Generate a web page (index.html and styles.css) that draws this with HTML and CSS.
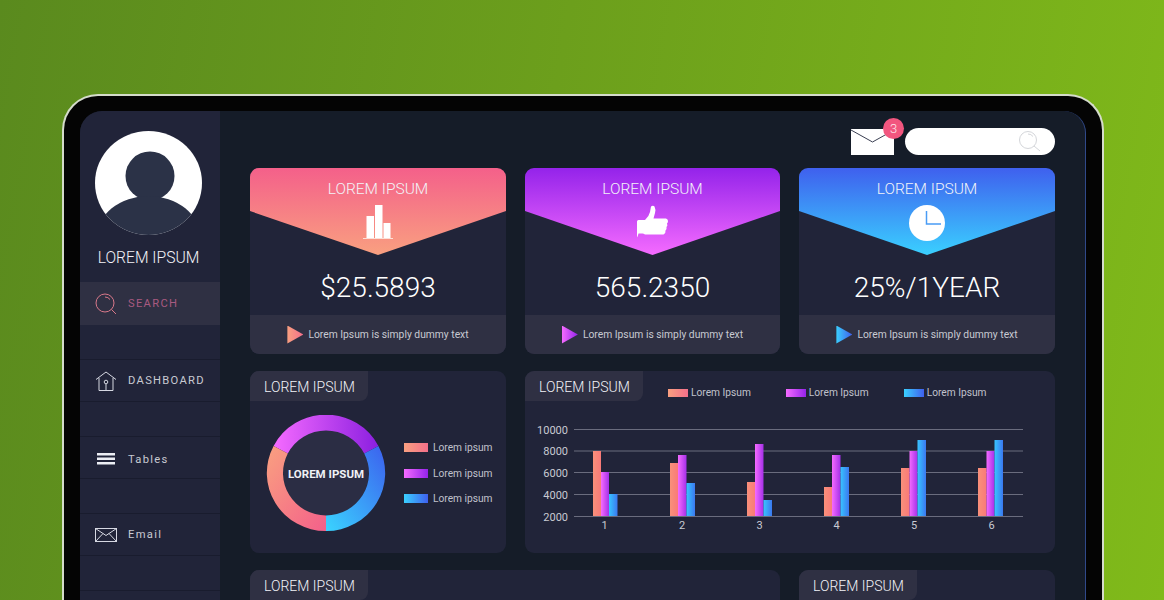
FILE: index.html
```html
<!DOCTYPE html>
<html>

<head>
    <meta charset="utf-8">
    <title>Dashboard</title>

    <link rel="stylesheet" href="styles.css">
</head>

<body>

    <div class="laptop">
        <div class="screen">

            <div class="sidebar">
                <svg class="avatar" width="107" height="104" viewBox="0 0 107 104">
                    <defs>
                        <clipPath id="avatarClip">
                            <ellipse cx="53.5" cy="52" rx="53.5" ry="52" />
                        </clipPath>
                    </defs>
                    <ellipse cx="53.5" cy="52" rx="53.5" ry="52" fill="#ffffff" />
                    <g clip-path="url(#avatarClip)" fill="#2b3247">
                        <circle cx="55" cy="45" r="24.5" />
                        <ellipse cx="53.5" cy="107" rx="52" ry="42" />
                    </g>
                </svg>
                <p class="user-name">LOREM IPSUM</p>

                <div class="nav">
                    <div class="nav-item active">
                        <svg width="24" height="24" viewBox="0 0 24 24" fill="none" stroke="#d9788a" stroke-width="1">
                            <circle cx="11" cy="11" r="9" />
                            <path d="M17.5 17.5l4.5 4.5M11 5a6 6 0 0 1 5 2.500" />
                        </svg>
                        <span>SEARCH</span>
                    </div>
                    <div class="nav-item">
                        <svg width="24" height="24" viewBox="0 0 24 24" fill="none" stroke="#d6d8e2" stroke-width="1">
                            <path d="M2 10.500L12 3l10 7.500M5 9v12.500h14V9" />
                            <circle cx="12" cy="13" r="1.800" />
                            <path d="M12 15v6.500" />
                        </svg>
                        <span>DASHBOARD</span>
                    </div>
                    <div class="nav-item low">
                        <svg width="24" height="24" viewBox="0 0 24 24" fill="#eceef4">
                            <rect x="3" y="6" width="18" height="2.500" />
                            <rect x="3" y="10.500" width="18" height="2.500" />
                            <rect x="3" y="15" width="18" height="2.500" />
                        </svg>
                        <span>Tables</span>
                    </div>
                    <div class="nav-item">
                        <svg width="24" height="24" viewBox="0 0 24 24" fill="none" stroke="#d6d8e2" stroke-width="1">
                            <rect x="1.500" y="5.500" width="21" height="13" />
                            <path d="M1.500 5.500L12 12.500l10.500-7M1.500 18.500l7.500-8M22.500 18.500l-7.500-8" />
                        </svg>
                        <span>Email</span>
                    </div>
                    <div class="nav-item"></div>
                </div>
            </div>

            <div class="main">
                <div class="topbar">
                    <div class="mail">
                        <svg width="43" height="26" viewBox="0 0 43 26">
                            <rect width="43" height="26" fill="#ffffff" />
                            <path d="M0 1l21.500 12L43 1" fill="none" stroke="#3a3f52" stroke-width="1" />
                        </svg>
                        <span class="badge">3</span>
                    </div>
                    <div class="search-box">
                        <svg width="24" height="24" viewBox="0 0 24 24" fill="none" stroke="#d4d6da" stroke-width="1">
                            <circle cx="10" cy="10" r="8.500" />
                            <path d="M16 16l6 5M10 4a6 6 0 0 1 5 2.500" />
                        </svg>
                    </div>
                </div>

                <div class="cards">
                    <div class="card">
                        <div class="card-head orange">
                            <p class="card-title">LOREM IPSUM</p>
                            <svg width="30" height="34" viewBox="0 0 30 34" fill="#ffffff">
                                <rect x="3.500" y="11" width="7.500" height="22" />
                                <rect x="12" y="0" width="7.500" height="33" />
                                <rect x="20.500" y="18" width="7" height="15" />
                                <rect y="33" width="30" height="1" fill="#fde0d8" />
                            </svg>
                        </div>
                        <p class="card-value">$25.5893</p>
                        <div class="card-foot">
                            <span class="play orange-h"></span>
                            <span>Lorem Ipsum is simply dummy text</span>
                        </div>
                    </div>

                    <div class="card">
                        <div class="card-head purple">
                            <p class="card-title">LOREM IPSUM</p>
                            <svg width="31" height="34" viewBox="0 0 31 34" fill="#ffffff">
                                <path d="M0 16.500q0-1.500 1.500-1.500H8q4-3.500 5-8l1-5.500q2-1.500 3.500 0q1.500 3 .5 6.500l-1.500 5.500H29q2 .5 2 2.500q0 1.500-1 2.500q1 2-.5 3.500q.5 2-1 3.500q.5 2.500-2 4H8q-2-1.500-3-1H1.500Q0 33.500 0 32z" />
                            </svg>
                        </div>
                        <p class="card-value">565.2350</p>
                        <div class="card-foot">
                            <span class="play purple-h"></span>
                            <span>Lorem Ipsum is simply dummy text</span>
                        </div>
                    </div>

                    <div class="card">
                        <div class="card-head blue">
                            <p class="card-title">LOREM IPSUM</p>
                            <svg width="36" height="36" viewBox="0 0 36 36">
                                <circle cx="18" cy="18" r="18" fill="#ffffff" />
                                <path d="M17.500 6v13H32" fill="none" stroke="#4a9cf5" stroke-width="1.500" />
                            </svg>
                        </div>
                        <p class="card-value">25%/1YEAR</p>
                        <div class="card-foot">
                            <span class="play blue-h"></span>
                            <span>Lorem Ipsum is simply dummy text</span>
                        </div>
                    </div>

                    <div class="panel">
                        <div class="panel-tab">LOREM IPSUM</div>
                        <div class="donut-row">
                            <svg width="120" height="116" viewBox="0 0 120 116">
                                <defs>
                                    <linearGradient id="donutPurple" x1="0" y1="0" x2="1" y2="0">
                                        <stop offset="0" stop-color="#f56bff" />
                                        <stop offset="1" stop-color="#8b1fe0" />
                                    </linearGradient>
                                    <linearGradient id="donutBlue" x1="1" y1="0" x2="0" y2="1">
                                        <stop offset="0" stop-color="#3c60ee" />
                                        <stop offset="1" stop-color="#3ad4ff" />
                                    </linearGradient>
                                    <linearGradient id="donutOrange" x1="0" y1="0" x2="1" y2="1">
                                        <stop offset="0" stop-color="#f9a080" />
                                        <stop offset="1" stop-color="#f4608a" />
                                    </linearGradient>
                                </defs>
                                <circle cx="60" cy="58" r="43" fill="#2b2d44" />
                                <path d="M7.600 31 A59 58 0 0 1 112.400 31 L98.200 38.500 A43 42.500 0 0 0 21.800 38.500 Z" fill="url(#donutPurple)" />
                                <path d="M112.400 31 A59 58 0 0 1 60 116 L60 100.500 A43 42.500 0 0 0 98.200 38.500 Z" fill="url(#donutBlue)" />
                                <path d="M60 116 A59 58 0 0 1 7.600 31 L21.800 38.500 A43 42.500 0 0 0 60 100.500 Z" fill="url(#donutOrange)" />
                                <text class="donut-label" x="60" y="63" text-anchor="middle">LOREM IPSUM</text>
                            </svg>
                            <div class="donut-legend">
                                <div class="legend-item"><span class="swatch orange-h"></span>Lorem ipsum</div>
                                <div class="legend-item"><span class="swatch purple-h"></span>Lorem ipsum</div>
                                <div class="legend-item"><span class="swatch blue-h"></span>Lorem ipsum</div>
                            </div>
                        </div>
                    </div>

                    <div class="panel wide">
                        <div class="chart-head">
                            <div class="panel-tab">LOREM IPSUM</div>
                            <div class="chart-legend">
                                <div class="legend-item"><span class="swatch-long orange-h"></span>Lorem Ipsum</div>
                                <div class="legend-item"><span class="swatch-long purple-h"></span>Lorem Ipsum</div>
                                <div class="legend-item"><span class="swatch-long blue-h"></span>Lorem Ipsum</div>
                            </div>
                        </div>
                        <svg class="chart" width="530" height="152" viewBox="525 401 530 152">
                            <defs>
                                <linearGradient id="barOrange">
                                    <stop offset="0" stop-color="#f9907a" />
                                    <stop offset="1" stop-color="#f97a78" />
                                </linearGradient>
                                <linearGradient id="barPurple">
                                    <stop offset="0" stop-color="#f56bff" />
                                    <stop offset="1" stop-color="#a530e8" />
                                </linearGradient>
                                <linearGradient id="barBlue">
                                    <stop offset="0" stop-color="#38c4ff" />
                                    <stop offset="1" stop-color="#3b78f0" />
                                </linearGradient>
                            </defs>

                            <g class="grid-lines">
                                <line x1="574" y1="429.500" x2="1023" y2="429.500" />
                                <line x1="574" y1="451" x2="1023" y2="451" />
                                <line x1="574" y1="472.500" x2="1023" y2="472.500" />
                                <line x1="574" y1="494.500" x2="1023" y2="494.500" />
                                <line x1="574" y1="516.500" x2="1023" y2="516.500" />
                            </g>

                            <g class="axis-y">
                                <text x="568" y="433.500">10000</text>
                                <text x="568" y="455">8000</text>
                                <text x="568" y="477">6000</text>
                                <text x="568" y="498.500">4000</text>
                                <text x="568" y="520.500">2000</text>
                            </g>

                            <g fill="url(#barOrange)">
                                <rect x="593" y="451" width="8" height="65" />
                                <rect x="670" y="463" width="8" height="53" />
                                <rect x="747" y="482" width="8" height="34" />
                                <rect x="824" y="487" width="8" height="29" />
                                <rect x="901" y="468" width="8.500" height="48" />
                                <rect x="978" y="468" width="8.500" height="48" />
                            </g>
                            <g fill="url(#barPurple)">
                                <rect x="601" y="472" width="8" height="44" />
                                <rect x="678" y="455" width="8.500" height="61" />
                                <rect x="755" y="444" width="8.500" height="72" />
                                <rect x="832" y="455" width="8.500" height="61" />
                                <rect x="909.500" y="451" width="8" height="65" />
                                <rect x="986.500" y="451" width="8" height="65" />
                            </g>
                            <g fill="url(#barBlue)">
                                <rect x="609" y="494" width="8.500" height="22" />
                                <rect x="686.500" y="483" width="8.500" height="33" />
                                <rect x="763.500" y="500" width="8.500" height="16" />
                                <rect x="840.500" y="467" width="8.500" height="49" />
                                <rect x="917.500" y="440" width="8.500" height="76" />
                                <rect x="994.500" y="440" width="8.500" height="76" />
                            </g>

                            <g class="axis-x">
                                <text x="604.500" y="529">1</text>
                                <text x="682" y="529">2</text>
                                <text x="759.500" y="529">3</text>
                                <text x="836.500" y="529">4</text>
                                <text x="914" y="529">5</text>
                                <text x="991.500" y="529">6</text>
                            </g>
                        </svg>
                    </div>

                    <div class="panel wide bottom">
                        <div class="panel-tab">LOREM IPSUM</div>
                    </div>
                    <div class="panel bottom">
                        <div class="panel-tab">LOREM IPSUM</div>
                    </div>
                </div>
            </div>

        </div>
    </div>

</body>

</html>
```

FILE: styles.css
```css
html,
body {
    height: 600px;
    margin: 0;
    overflow: hidden;
}

body {
    background: linear-gradient(100deg, #5a8a1e 0%, #6c9f1c 45%, #80ba1a 100%);
    font-family: "Roboto", "Liberation Sans", sans-serif;
    font-weight: 300;
    color: #f2f3f8;
}

p {
    margin: 0;
}

.laptop {
    box-sizing: border-box;
    width: 1042px;
    height: 506px;
    overflow: hidden;
    margin: 94px 0 0 62px;
    padding: 15px 16px 0;
    border: 2px solid #d5dccb;
    border-bottom: 0;
    border-radius: 36px 36px 0 0;
    background: #040404;
}

.screen {
    display: flex;
    height: 489px;
    overflow: hidden;
    border-right: 1px solid #30498a;
    border-radius: 22px 22px 0 0;
    background: #151c28;
}

/* sidebar */

.sidebar {
    flex: 0 0 140px;
    padding-top: 20px;
    background: #212439;
}

.avatar {
    display: block;
    margin-left: 15px;
}

.user-name {
    margin-top: 14px;
    padding-right: 3px;
    text-align: center;
    font-size: 15.7px;
    line-height: 18px;
}

.nav {
    display: flex;
    flex-direction: column;
    gap: 34px;
    margin-top: 15px;
}

.nav-item {
    box-sizing: border-box;
    display: flex;
    align-items: center;
    gap: 10px;
    height: 43px;
    padding-left: 14px;
    border-top: 1px solid #191c2e;
    border-bottom: 1px solid #191c2e;
    font-size: 11.2px;
    letter-spacing: 1.3px;
    color: #c8cad2;
    font-weight: 400;
}

.nav-item.low {
    padding-top: 3px;
}

.nav-item.active {
    border: 0;
    background: #2f3043;
    color: #a85a80;
}

/* main */

.main {
    flex: 1;
    padding: 17px 30px 0;
}

.topbar {
    display: flex;
    justify-content: flex-end;
    align-items: center;
    gap: 11px;
    height: 27px;
    margin-bottom: 13px;
}

.mail {
    position: relative;
    height: 26px;
}

.mail svg {
    display: block;
}

.badge {
    position: absolute;
    top: -11px;
    right: -10px;
    width: 21px;
    height: 21px;
    border-radius: 50%;
    background: #f2567f;
    text-align: center;
    font-size: 13px;
    line-height: 21px;
    color: #ffe6ec;
}

.search-box {
    box-sizing: border-box;
    display: flex;
    justify-content: flex-end;
    align-items: center;
    width: 150px;
    height: 27px;
    padding-right: 13px;
    border-radius: 14px;
    background: #ffffff;
}

.cards {
    display: grid;
    grid-template-columns: 256px 255px 256px;
    grid-auto-rows: min-content;
    gap: 17px 19px;
}

.card {
    display: flex;
    flex-direction: column;
    height: 186px;
    overflow: hidden;
    border-radius: 9px;
    background: #212439;
}

.card-head {
    display: flex;
    flex-direction: column;
    align-items: center;
    height: 87px;
    clip-path: polygon(0 0, 100% 0, 100% 43px, 50% 87px, 0 43px);
}

.card-title {
    margin: 12px 0 7px;
    font-size: 15.5px;
    line-height: 18px;
}

.card-value {
    padding-top: 16px;
    height: 44px;
    text-align: center;
    font-size: 28px;
    line-height: 34px;
    color: #ffffff;
}

.card-foot {
    display: flex;
    justify-content: center;
    align-items: center;
    gap: 5px;
    height: 39px;
    background: #2f3043;
    font-size: 10.3px;
    font-weight: 400;
    color: #c8cad2;
}

.play {
    width: 16px;
    height: 18px;
    clip-path: polygon(0 0, 100% 50%, 0 100%);
}

.orange {
    background: linear-gradient(#f4608a, #f9a080);
}

.purple {
    background: linear-gradient(#9423ea, #f56bff);
}

.blue {
    background: linear-gradient(#3f60ee, #3ad0ff);
}

.orange-h {
    background: linear-gradient(90deg, #f9a080, #f4708a);
}

.purple-h {
    background: linear-gradient(90deg, #f56bff, #9423ea);
}

.blue-h {
    background: linear-gradient(90deg, #3ad0ff, #3f60ee);
}

/* panels */

.panel {
    height: 182px;
    overflow: hidden;
    border-radius: 9px;
    background: #212439;
}

.panel.wide {
    grid-column: span 2;
}

.panel.bottom {
    height: 30px;
    border-radius: 9px 9px 0 0;
}

.panel-tab {
    box-sizing: border-box;
    width: 118px;
    height: 30px;
    padding-left: 14px;
    border-bottom-right-radius: 8px;
    background: #2f3043;
    font-size: 14px;
    line-height: 33px;
}

.donut-row {
    display: flex;
    padding: 14px 0 0 16px;
}

.donut-row > svg {
    flex: none;
}

.donut-label {
    font-size: 11.5px;
    font-weight: 700;
    fill: #f0f1f6;
}

.donut-legend {
    display: flex;
    flex-direction: column;
    gap: 10.5px;
    margin: 25px 0 0 18px;
}

.legend-item {
    display: flex;
    align-items: center;
    gap: 5px;
    height: 15px;
    font-size: 10.2px;
    font-weight: 400;
    color: #c0c2cc;
}

.swatch {
    width: 24px;
    height: 9px;
}

.chart-head {
    display: flex;
}

.chart-legend {
    display: flex;
    gap: 35px;
    margin: 14px 0 0 25px;
}

.chart-legend .legend-item {
    gap: 3px;
}

.swatch-long {
    width: 20px;
    height: 8px;
}

.chart {
    display: block;
}

.grid-lines line {
    stroke: #6a6c7e;
    stroke-width: 1;
}

.axis-y text,
.axis-x text {
    font-size: 11px;
    font-weight: 400;
    fill: #c8cad2;
}

.axis-y text {
    text-anchor: end;
}

.axis-x text {
    text-anchor: middle;
}
```
